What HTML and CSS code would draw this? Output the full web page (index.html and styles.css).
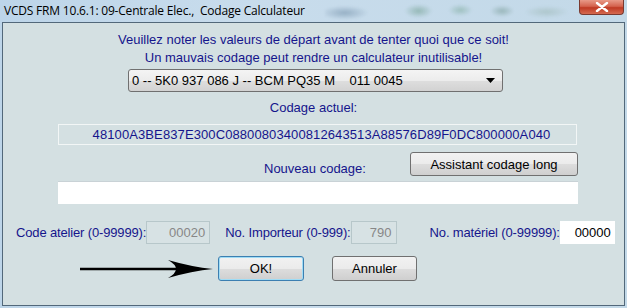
FILE: index.html
```html
<!DOCTYPE html>
<html lang="fr">
<head>
    <meta charset="UTF-8">
    <meta name="viewport" content="width=device-width, initial-scale=1.0">
    <title>Codage Calculateur</title>
    <link rel="stylesheet" href="styles.css">
</head>
<body>
    <div class="window">
        <div class="titlebar">
            <span class="title">VCDS FRM 10.6.1: 09-Centrale Elec.,&nbsp; Codage Calculateur</span>
            <span class="glass"></span>
            <span class="close">
                <svg width="14" height="10" viewBox="0 0 14 10">
                    <path d="M2 1 L12 9 M12 1 L2 9" stroke="#fff" stroke-width="2.4" stroke-linecap="round"/>
                </svg>
            </span>
        </div>

        <div class="client">
            <p class="warn">Veuillez noter les valeurs de départ avant de tenter quoi que ce soit!</p>
            <p class="warn">Un mauvais codage peut rendre un calculateur inutilisable!</p>

            <div class="combo">
                <span class="combo-text">0 -- 5K0 937 086 J -- BCM PQ35 M    011 0045</span>
                <svg width="9" height="5" viewBox="0 0 9 5"><path d="M0 0 H9 L4.5 5 Z" fill="#000"/></svg>
            </div>

            <p class="label centered">Codage actuel:</p>
            <div class="code-field">48100A3BE837E300C08800803400812643513A88576D89F0DC800000A040</div>

            <div class="new-row">
                <span class="label">Nouveau codage:</span>
                <button class="btn wide">Assistant codage long</button>
            </div>
            <div class="code-input"></div>

            <div class="ids">
                <span class="label">Code atelier (0-99999):</span>
                <span class="num disabled w-atelier">00020</span>
                <span class="label gap-imp">No. Importeur (0-999):</span>
                <span class="num disabled w-imp">790</span>
                <span class="label gap-mat">No. matériel (0-99999):</span>
                <span class="num w-mat">00000</span>
            </div>

            <div class="actions">
                <svg class="pointer" width="134" height="20" viewBox="0 0 134 20">
                    <path d="M0 8.7 H110 V11.3 H0 Z" fill="#000"/>
                    <path d="M88 1 Q112 8 133 10 Q112 12 88 19 Q104 10 88 1 Z" fill="#000"/>
                </svg>
                <button class="btn ok">OK!</button>
                <button class="btn">Annuler</button>
            </div>
        </div>
    </div>
</body>
</html>
```

FILE: styles.css
```css
body {
    margin: 0;
    background-color: #c6dbeb;
    font-family: 'Liberation Sans', Arial, sans-serif;
}

.window {
    width: 627px;
    height: 308px;
    background: linear-gradient(to right, #bdd5e9 0%, #c8dcec 40%, #c3d9e8 100%);
}

.titlebar {
    height: 22px;
    display: flex;
    align-items: flex-start;
}

.title {
    font-family: 'Open Sans', 'Noto Sans', sans-serif;
    font-size: 12px;
    line-height: 22px;
    padding-left: 4px;
    letter-spacing: -0.2px;
    color: #000;
    white-space: pre;
}

.glass {
    flex: 1;
    height: 18px;
    margin: 2px 8px 0 20px;
    background:
        radial-gradient(ellipse 24px 7px at 8% 60%, rgba(110, 140, 165, 0.55), transparent),
        radial-gradient(ellipse 14px 7px at 38% 50%, rgba(100, 150, 130, 0.5), transparent),
        radial-gradient(ellipse 12px 6px at 55% 45%, rgba(110, 160, 140, 0.45), transparent),
        radial-gradient(ellipse 12px 6px at 72% 50%, rgba(100, 140, 130, 0.45), transparent),
        radial-gradient(ellipse 22px 6px at 90% 55%, rgba(140, 170, 160, 0.4), transparent);
    filter: blur(1px);
}

.close {
    width: 45px;
    height: 15px;
    margin-right: 3px;
    box-sizing: border-box;
    border: 1px solid #7a3a30;
    border-top: none;
    border-radius: 0 0 4px 4px;
    background: linear-gradient(to bottom, #e89a88 0%, #d4634e 45%, #bf3a24 55%, #d56a50 100%);
    display: flex;
    align-items: center;
    justify-content: center;
}

.client {
    margin-left: 2px;
    width: 623px;
    height: 284px;
    box-sizing: border-box;
    border: 1px solid #52687a;
    background-color: #d4e0e2;
    padding-top: 8px;
    display: flex;
    flex-direction: column;
    font-size: 13px;
}

.warn {
    margin: 0;
    line-height: 18px;
    text-align: center;
    color: #15158c;
}

.label {
    color: #15158c;
    line-height: 18px;
    white-space: nowrap;
}

.centered {
    margin: 7px 0 0;
    text-align: center;
}

.combo {
    margin: 2px 0 0 125px;
    width: 375px;
    height: 23px;
    box-sizing: border-box;
    border: 1px solid #707070;
    border-radius: 3px;
    background: linear-gradient(to bottom, #f4f4f4 0%, #ececec 50%, #dedede 51%, #d2d2d2 100%);
    display: flex;
    align-items: center;
    justify-content: space-between;
    padding: 0 7px 0 3px;
}

.combo-text {
    white-space: pre;
    color: #000;
}

.code-field {
    margin: 7px 0 0 55px;
    width: 519px;
    height: 21px;
    box-sizing: border-box;
    border: 1px solid #f2f6f6;
    color: #15158c;
    text-align: center;
    line-height: 19px;
    padding-left: 8px;
    letter-spacing: 0.1px;
}

.new-row {
    margin: 7px 0 0 55px;
    width: 520px;
    display: flex;
    align-items: flex-end;
    justify-content: space-between;
}

.new-row .label {
    margin-left: 206px;
    line-height: 14px;
}

.btn {
    font-family: 'Liberation Sans', Arial, sans-serif;
    font-size: 13px;
    color: #000;
    height: 25px;
    box-sizing: border-box;
    border: 1px solid #707070;
    border-radius: 3px;
    background: linear-gradient(to bottom, #f2f2f2 0%, #ebebeb 50%, #dddddd 51%, #cfcfcf 100%);
    padding: 0;
}

.wide {
    width: 168px;
    height: 24px;
}

.code-input {
    margin: 5px 0 0 55px;
    width: 520px;
    height: 23px;
    box-sizing: border-box;
    background-color: #fff;
    border-top: 1px solid #c9d2d6;
}

.ids {
    margin-top: 17px;
    padding-left: 13px;
    display: flex;
    align-items: center;
    height: 23px;
}

.ids .label {
    letter-spacing: -0.15px;
}

.num {
    height: 23px;
    box-sizing: border-box;
    line-height: 21px;
    text-align: right;
    padding-right: 4px;
    border: 1px solid #fff;
    background-color: #fff;
    color: #000;
}

.num.disabled {
    border-color: #b7c7ca;
    background-color: #d7e2e4;
    color: #878787;
}

.w-atelier { width: 64px; }
.w-imp { width: 46px; }
.w-mat { width: 55px; padding-right: 3px; }

.gap-imp { margin-left: 15px; }
.gap-mat { margin-left: 33px; }

.actions {
    margin-top: 12px;
    padding-left: 77px;
    display: flex;
    align-items: center;
}

.pointer {
    margin-right: 4px;
}

.ok {
    width: 86px;
    border-color: #3c7fb1;
    box-shadow: inset 0 0 0 1px #9fdcf5;
}

.actions .btn + .btn {
    width: 85px;
    margin-left: 28px;
}
```
